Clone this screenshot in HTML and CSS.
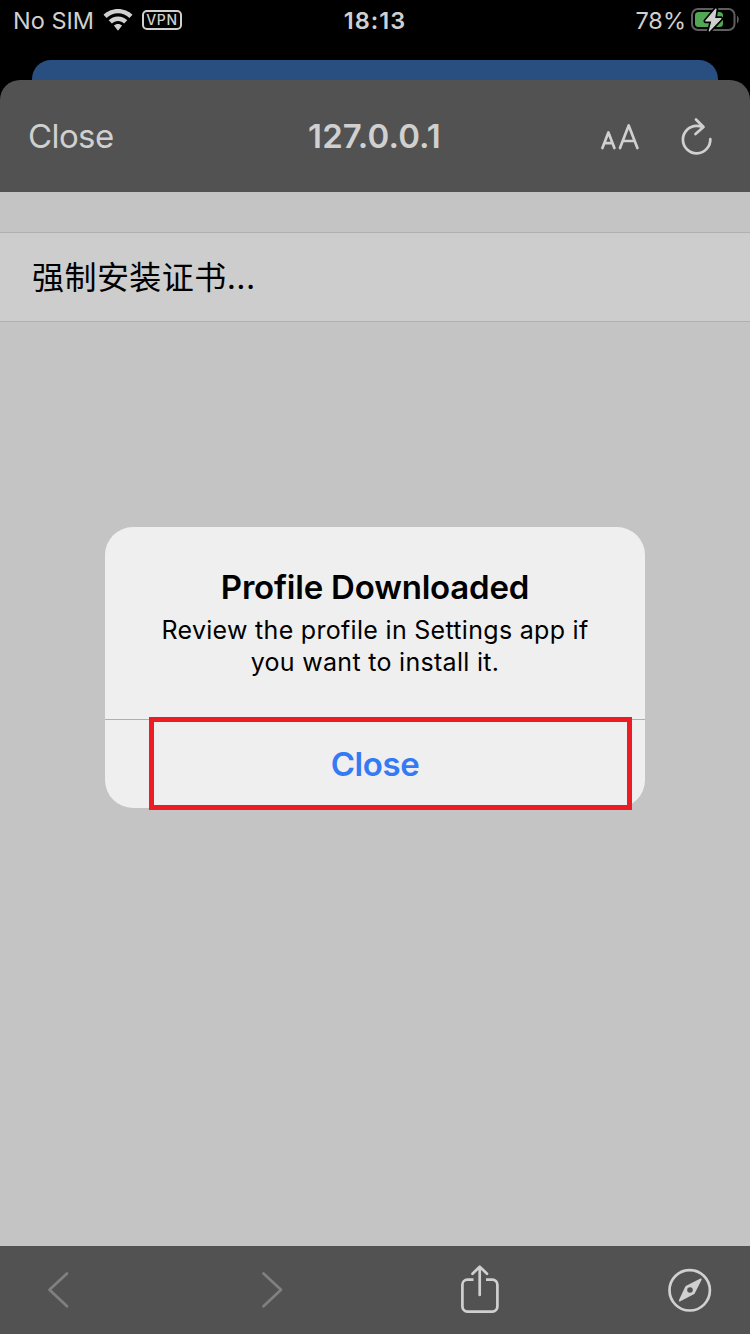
FILE: index.html
```html
<!DOCTYPE html>
<html lang="en">
<head>
<meta charset="utf-8">
<title>127.0.0.1</title>
<link rel="stylesheet" href="styles.css">
</head>
<body>
<div class="screen">
  <header class="status">
    <div class="status-left">
      <span class="carrier">No SIM</span>
      <svg class="wifi" width="30" height="22" viewBox="0 0 30 22" fill="#d0d0d0">
        <path d="M15 0C9.300 0 4.100 2.200.5 5.800L3.600 9C6.600 6.100 10.600 4.300 15 4.300s8.400 1.800 11.400 4.700l3.100-3.200C25.900 2.200 20.700 0 15 0Z"/>
        <path d="M15 7.500c-3.600 0-6.900 1.400-9.300 3.700l3.200 3.200c1.600-1.500 3.800-2.500 6.100-2.500s4.500 1 6.100 2.500l3.200-3.200C21.900 8.900 18.600 7.500 15 7.500Z"/>
        <path d="M15 14.900c-1.600 0-3 .6-4.100 1.600L15 21.700l4.100-5.200c-1.100-1-2.500-1.600-4.100-1.600Z"/>
      </svg>
      <span class="vpn">VPN</span>
    </div>
    <span class="clock">18:13</span>
    <div class="status-right">
      <span class="percent">78%</span>
      <svg class="battery" width="50" height="26" viewBox="0 0 50 26">
        <rect x="1" y="3" width="42.500" height="21" rx="6" fill="none" stroke="#5f5f5f" stroke-width="2"/>
        <path d="M46 9.500c2.300 1.500 2.300 6.500 0 8Z" fill="#5f5f5f"/>
        <rect x="4" y="6" width="28" height="15" rx="3.500" fill="#52a852"/>
        <path d="M25 3 14.800 15h6.200l-2.700 9.800L30 12.600h-6.500Z" fill="#000" stroke="#000" stroke-width="4.500" stroke-linejoin="round"/>
        <path d="M25 3 14.800 15h6.200l-2.700 9.800L30 12.600h-6.500Z" fill="#d0d0d0" stroke="#d0d0d0" stroke-width="1.200" stroke-linejoin="round"/>
      </svg>
    </div>
  </header>
  <div class="back-card"></div>
  <nav class="navbar">
    <span class="nav-close">Close</span>
    <h1 class="nav-title">127.0.0.1</h1>
    <div class="nav-actions">
      <svg width="40" height="40" viewBox="600 117 40 40" fill="none" stroke="#d0d0d0" stroke-width="2.700" stroke-linecap="round" stroke-linejoin="round">
        <path d="M602.400 148 608.400 132.500 614.400 148M604.500 143.200H612.300"/>
        <path d="M620 148 628.700 125.500 637.400 148M623 141H634.400"/>
      </svg>
      <svg width="34" height="40" viewBox="680 117 34 40" fill="none" stroke="#d0d0d0" stroke-width="2.700" stroke-linecap="round" stroke-linejoin="round">
        <path d="M710.300 139A13.700 13.700 0 1 1 696.600 125.900Q700 125.900 702.500 127"/>
        <path d="M696 119.500 703.500 127 695.500 134"/>
      </svg>
    </div>
  </nav>
  <main class="page">
    <p class="row">强制安装证书...</p>
  </main>
  <footer class="toolbar">
    <svg class="back" width="26" height="40" viewBox="46 1270 26 40"><path class="chevron" d="M67 1273.400 49.500 1289.800 67 1306.300"/></svg>
    <svg class="forward" width="26" height="40" viewBox="260 1270 26 40"><path class="chevron" d="M263.500 1273.400 281 1289.800 263.500 1306.300"/></svg>
    <svg class="share" width="40" height="50" viewBox="460 1265 40 50" fill="none" stroke="#d0d0d0" stroke-width="2.700" stroke-linecap="round" stroke-linejoin="round">
      <path d="M479.700 1267V1295M472.500 1273.700 479.700 1266.700 487 1273.700"/>
      <path stroke-linecap="butt" d="M473.500 1279.700H467.400A5 5 0 0 0 462.400 1284.700V1306.600A5 5 0 0 0 467.400 1311.600H492.400A5 5 0 0 0 497.400 1306.600V1284.700A5 5 0 0 0 492.400 1279.700H486"/>
    </svg>
    <svg class="compass" width="44" height="44" viewBox="0 0 44 44">
      <circle cx="21.700" cy="22.300" r="20.200" fill="none" stroke="#d0d0d0" stroke-width="2.700"/>
      <path fill="#d0d0d0" fill-rule="evenodd" d="M32.500 10.600 18.200 17.700Q17.600 18 17.300 18.600L11 31.900Q10.500 34 12.400 33.200L25.800 26.300Q26.400 26 26.700 25.400L33.500 12Q34 10.200 32.500 10.600ZM22 19.200A2.800 2.800 0 1 1 22 24.800A2.800 2.800 0 1 1 22 19.200Z"/>
    </svg>
  </footer>
  <section class="alert" role="alertdialog">
    <div class="alert-body">
      <h2 class="alert-title">Profile Downloaded</h2>
      <p class="alert-text">Review the profile in Settings app if<br>you want to install it.</p>
    </div>
    <div class="alert-action">Close</div>
    <div class="highlight"></div>
  </section>
</div>
</body>
</html>
```
FILE: styles.css
```css
* { box-sizing: border-box; }
body { margin: 0; background: #000; }
h1, h2, p { margin: 0; }
svg { display: block; flex: none; }
.screen {
  position: relative;
  display: flex;
  flex-direction: column;
  width: 750px;
  height: 1334px;
  overflow: hidden;
  background: #000;
  color: #d0d0d0;
  font-family: Inter, "Noto Sans CJK SC", sans-serif;
  white-space: nowrap;
}
.status {
  display: grid;
  grid-template-columns: 1fr auto 1fr;
  align-items: center;
  height: 60px;
  padding: 0 9px 19px 13px;
  font-size: 23.5px;
  line-height: 30px;
}
.status-left, .status-right { display: flex; align-items: center; }
.status-right { justify-content: flex-end; }
.carrier { width: 90px; }
.wifi { margin-bottom: 1px; }
.vpn {
  width: 40px;
  height: 20px;
  margin: 0 0 1px 9px;
  border: 2px solid #d0d0d0;
  border-radius: 5px;
  font-size: 14px;
  font-weight: 500;
  line-height: 16px;
  text-align: center;
  letter-spacing: 0.6px;
}
.clock { padding-right: 4px; font-weight: 600; letter-spacing: 1px; }
.percent { margin-right: 5px; }
.battery { margin-bottom: 3px; }
.back-card {
  height: 20px;
  margin: 0 32px;
  border-radius: 19px 19px 0 0;
  background: #294e80;
}
.navbar {
  display: grid;
  grid-template-columns: 1fr auto 1fr;
  align-items: center;
  height: 112px;
  padding: 2px 36px 0 28px;
  border-radius: 20px 20px 0 0;
  background: #525252;
  font-size: 33px;
}
.nav-close { padding-bottom: 3px; letter-spacing: -0.6px; }
.nav-title { padding: 0 0 3px 7px; font-size: 33px; font-weight: 600; letter-spacing: 0.1px; }
.nav-actions { display: flex; justify-content: flex-end; gap: 40px; }
.page { flex: 1; padding-top: 40px; background: #c4c4c4; }
.row {
  height: 90px;
  padding-left: 32px;
  border: solid #b0b0b0;
  border-width: 1px 0;
  background: #cdcdcd;
  color: #000;
  font-size: 32px;
  line-height: 90px;
  letter-spacing: 0.45px;
}
.toolbar {
  display: flex;
  align-items: center;
  height: 88px;
  padding: 0 38px 0 46px;
  background: #525252;
}
.chevron {
  fill: none;
  stroke: #808080;
  stroke-width: 2.7px;
  stroke-linecap: round;
  stroke-linejoin: round;
}
.forward { margin-left: 188px; }
.share { margin-left: 174px; }
.compass { margin-left: auto; }
.alert {
  position: absolute;
  left: 105px;
  top: 527px;
  width: 540px;
  height: 281px;
  border-radius: 28px;
  background: #efefef;
  color: #000;
  text-align: center;
}
.alert-body { height: 193px; padding-top: 39px; border-bottom: 1px solid #b0b0b0; }
.alert-title { font-size: 33px; font-weight: 600; line-height: 42px; letter-spacing: -0.2px; }
.alert-text { padding-top: 6px; font-size: 25px; line-height: 32px; letter-spacing: 0.3px; }
.alert-action {
  color: #347af5;
  font-size: 33px;
  font-weight: 600;
  line-height: 89px;
  letter-spacing: -0.4px;
}
.highlight {
  position: absolute;
  left: 44px;
  top: 190px;
  width: 483px;
  height: 93px;
  border: 5px solid #ed1c24;
}
```
